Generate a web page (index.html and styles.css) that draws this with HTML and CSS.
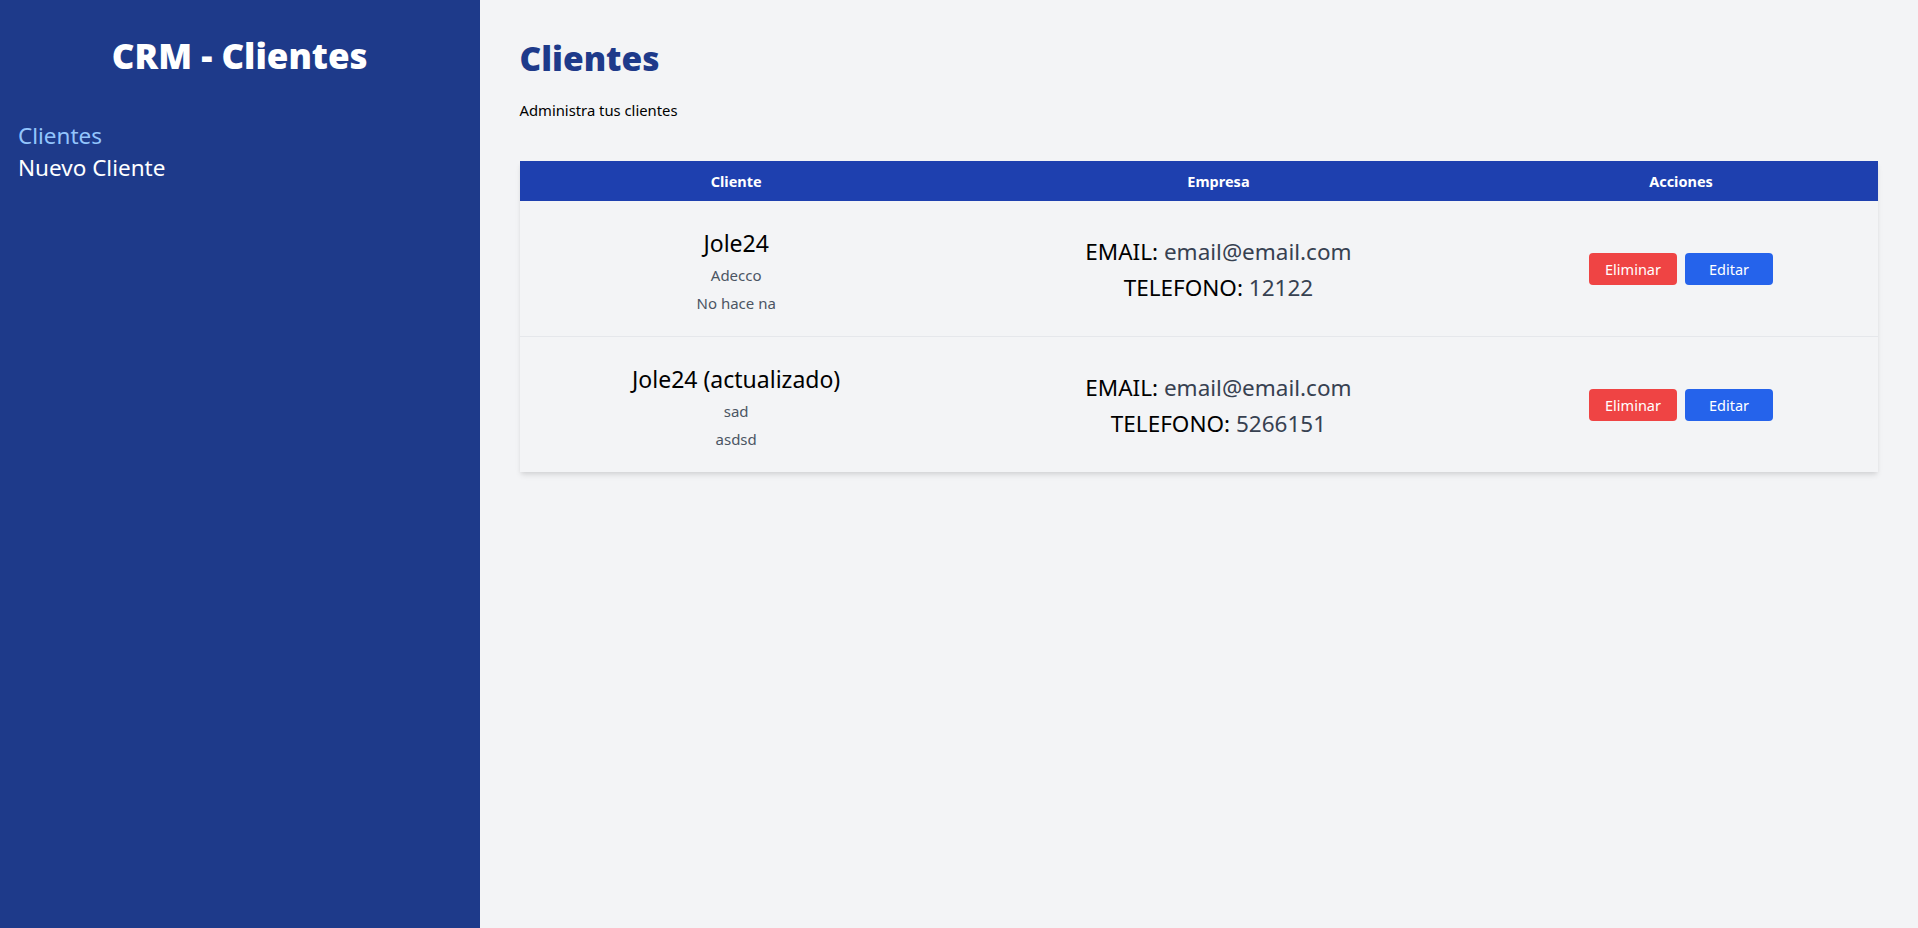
FILE: index.html
```html
<!DOCTYPE html>
<html lang="es">
<head>
<meta charset="utf-8">
<title>CRM - Clientes</title>
<link rel="stylesheet" href="styles.css">
</head>
<body>
<div class="layout">
  <aside class="sidebar">
    <h2 class="brand">CRM - Clientes</h2>
    <nav class="nav">
      <a class="nav-link active" href="#">Clientes</a>
      <a class="nav-link" href="#">Nuevo Cliente</a>
    </nav>
  </aside>
  <main class="main">
    <h1 class="page-title">Clientes</h1>
    <p class="page-sub">Administra tus clientes</p>
    <table class="clients">
      <colgroup>
        <col class="col-cliente">
        <col class="col-empresa">
        <col class="col-acciones">
      </colgroup>
      <thead>
        <tr>
          <th>Cliente</th>
          <th>Empresa</th>
          <th>Acciones</th>
        </tr>
      </thead>
      <tbody>
        <tr>
          <td class="cell-client">
            <p class="client-name">Jole24</p>
            <p class="client-meta">Adecco</p>
            <p class="client-meta">No hace na</p>
          </td>
          <td class="cell-contact">
            <p class="contact-line">EMAIL: <span class="contact-val">email@email.com</span></p>
            <p class="contact-line">TELEFONO: <span class="contact-val">12122</span></p>
          </td>
          <td class="cell-actions">
            <div class="actions">
              <button class="btn btn-red">Eliminar</button>
              <button class="btn btn-blue">Editar</button>
            </div>
          </td>
        </tr>
        <tr>
          <td class="cell-client">
            <p class="client-name">Jole24 (actualizado)</p>
            <p class="client-meta">sad</p>
            <p class="client-meta">asdsd</p>
          </td>
          <td class="cell-contact">
            <p class="contact-line">EMAIL: <span class="contact-val">email@email.com</span></p>
            <p class="contact-line">TELEFONO: <span class="contact-val">5266151</span></p>
          </td>
          <td class="cell-actions">
            <div class="actions">
              <button class="btn btn-red">Eliminar</button>
              <button class="btn btn-blue">Editar</button>
            </div>
          </td>
        </tr>
      </tbody>
    </table>
  </main>
</div>
</body>
</html>
```

FILE: styles.css
```css
* { box-sizing: border-box; }

html, body {
  margin: 0;
  padding: 0;
  height: 100%;
}

body {
  font-family: "Noto Sans", "Open Sans", sans-serif;
  background: #f3f4f6;
  color: #000;
}

.layout {
  display: flex;
  min-height: 100vh;
}

.sidebar {
  width: 25%;
  flex: 0 0 25%;
  background: #1e3a8a;
  padding: 38px 16px 20px 16px;
}

.brand {
  margin: 0;
  color: #fff;
  text-align: center;
  font-size: 35px;
  line-height: 36px;
  font-weight: 900;
}

.nav {
  margin-top: 48px;
  display: flex;
  flex-direction: column;
  gap: 4px;
}

.nav-link {
  display: block;
  color: #fff;
  text-decoration: none;
  font-size: 22.5px;
  line-height: 28px;
  padding-left: 2px;
}

.nav-link.active {
  color: #93c5fd;
}

.main {
  flex: 1;
  padding: 40px;
}

.page-title {
  margin: 0;
  color: #1e3a8a;
  font-size: 33.5px;
  line-height: 36px;
  font-weight: 900;
}

.page-sub {
  margin: 22px 0 0 0;
  font-size: 14.8px;
  line-height: 24px;
}

.clients {
  margin-top: 39px;
  width: 100%;
  table-layout: fixed;
  border-collapse: collapse;
  box-shadow: 0 4px 6px -1px rgba(0,0,0,0.1), 0 2px 4px -1px rgba(0,0,0,0.06);
}

.col-cliente { width: 31.9%; }
.col-empresa { width: 39.1%; }
.col-acciones { width: 29%; }

.clients th {
  background: #1e40af;
  color: #fff;
  font-size: 14.5px;
  font-weight: 700;
  line-height: 20px;
  padding: 10px 16px;
  text-align: center;
}

.clients td {
  text-align: center;
  vertical-align: middle;
  padding: 0 16px;
}

.clients tbody tr + tr td {
  border-top: 1px solid #e5e7eb;
}

.clients td.cell-client {
  padding-top: 28px;
  padding-bottom: 23px;
}

.clients td.cell-contact {
  padding-top: 3px;
}

.client-name {
  margin: 0;
  font-size: 23px;
  line-height: 28px;
}

.client-meta {
  margin: 8px 0 0 0;
  font-size: 15px;
  line-height: 20px;
  color: #4b5563;
}

.contact-line {
  margin: 0;
  font-size: 22.5px;
  line-height: 32px;
}

.contact-line + .contact-line {
  margin-top: 4px;
}

.contact-val {
  color: #374151;
}

.actions {
  display: flex;
  justify-content: center;
  gap: 8px;
}

.btn {
  width: 88px;
  height: 32px;
  border: none;
  border-radius: 4px;
  color: #fff;
  font-family: "Noto Sans", "Open Sans", sans-serif;
  font-size: 14.5px;
  padding: 0;
  cursor: pointer;
}

.btn-red { background: #ef4444; }
.btn-blue { background: #2563eb; }
```
